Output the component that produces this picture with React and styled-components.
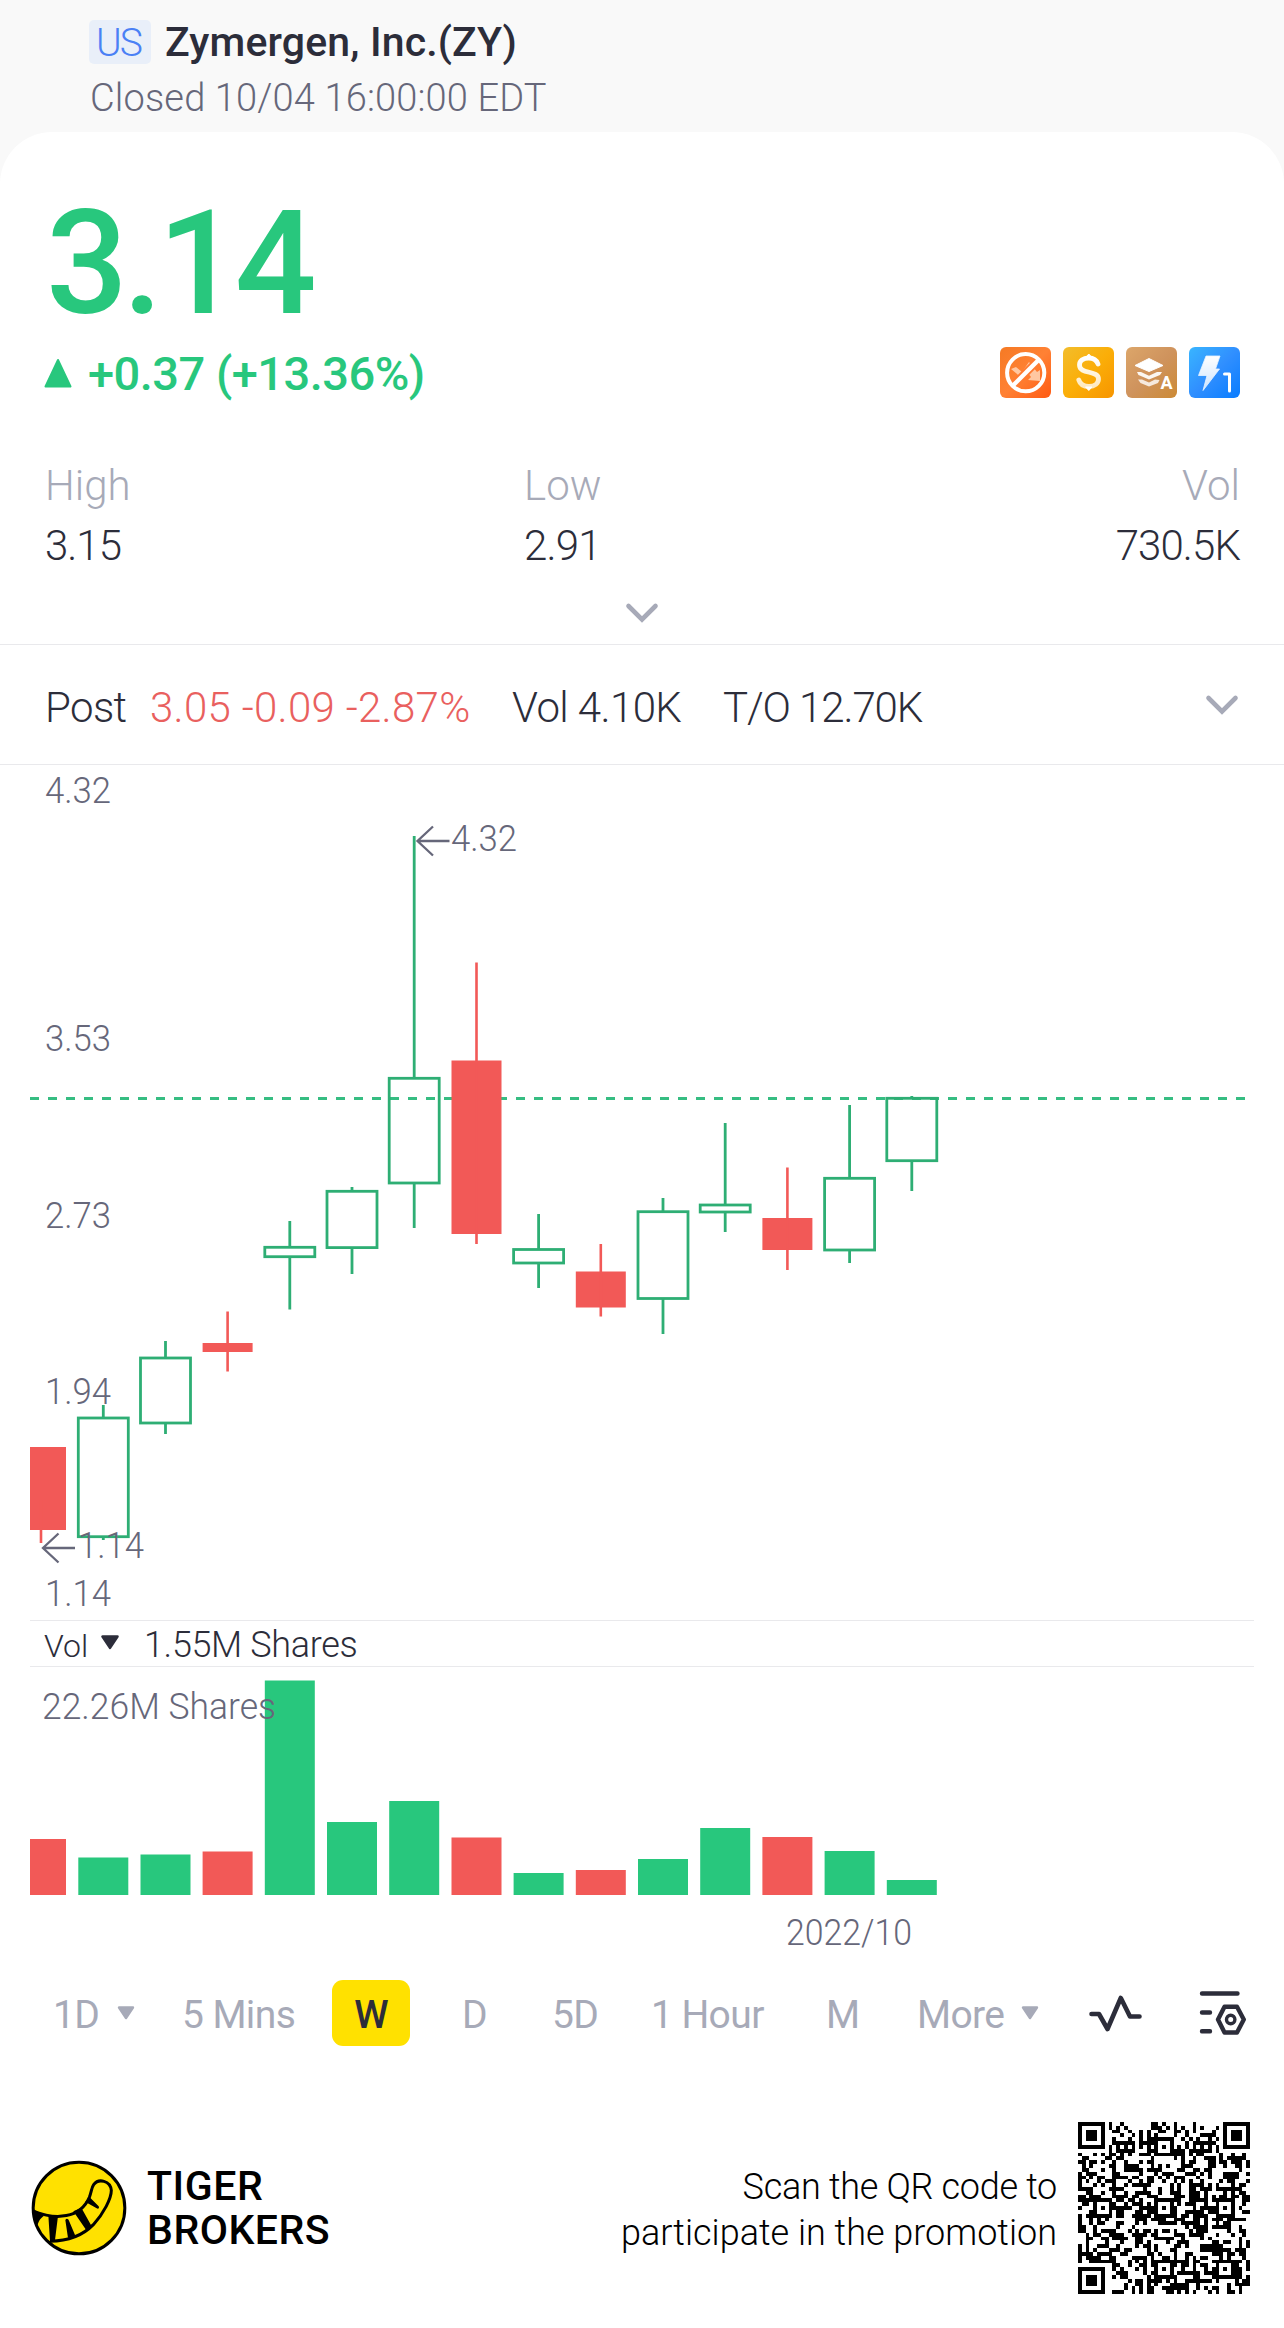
import React from 'react';
import styled, { createGlobalStyle } from 'styled-components';

const GREEN = '#28c77d';
const LINE_GREEN = '#2eae74';
const RED = '#f25957';
const INK = '#2c2d3a';
const GRAY = '#66677a';
const LIGHT = '#a7aab8';

const GlobalStyle = createGlobalStyle`
    *{
        box-sizing:border-box;
    }
    body{
        margin:0;
        background:#fff;
        font-family:Roboto, "Liberation Sans", sans-serif;
        color:${INK};
    }
    svg{
        display:block;
    }
`;

const Page = styled.div`
    width:1284px;
    height:2328px;
    overflow:hidden;
    display:flex;
    flex-direction:column;
    background:#f9f9f9;
`;

const Text = styled.span`
    display:block;
    white-space:pre;
    font-size:${p => p.$size || 42}px;
    font-weight:${p => p.$weight || 350};
    letter-spacing:${p => p.$spacing || 0}px;
    line-height:${p => p.$line || 60}px;
    color:${p => p.$color || INK};
`;

const Header = styled.header`
    height:132px;
    padding:20px 0 0 89px;
`;

const TitleRow = styled.div`
    display:flex;
    gap:14px;
`;

const Market = styled.div`
    width:62px;
    height:44px;
    padding-right:3px;
    display:flex;
    justify-content:center;
    border-radius:5px;
    background:#e9eff9;
`;

const Status = styled.div`
    margin:12px 0 0 1px;
`;

const Panel = styled.main`
    flex:1;
    padding-top:72px;
    border-radius:52px 52px 0 0;
    background:#fff;
`;

const Price = styled.div`
    padding-left:46px;
`;

const ChangeRow = styled.div`
    display:flex;
    align-items:center;
    height:52px;
    margin-top:23px;
    padding:0 44px;
`;

const ChangeText = styled.div`
    flex:1;
    padding:1px 0 0 16px;
`;

const Badges = styled.div`
    display:flex;
    gap:12px;
    margin-top:-2px;
`;

const Stats = styled.div`
    display:flex;
    margin-top:57px;
    padding:0 44px 0 45px;
`;

const Stat = styled.div`
    width:${p => p.$width || 'auto'};
    flex:${p => (p.$width ? 'none' : 1)};
    text-align:${p => p.$align || 'left'};
`;

const ExpandRow = styled.div`
    display:flex;
    justify-content:center;
    height:69px;
    padding-top:26px;
    border-bottom:1px solid #e9e9ec;
`;

const PostRow = styled.div`
    display:flex;
    align-items:center;
    height:120px;
    padding:7px 45px 0 45px;
    border-bottom:1px solid #e9e9ec;
`;

const PostItem = styled.div`
    width:${p => p.$width}px;
`;

const PostToggle = styled.div`
    margin:-7px 0 0 auto;
`;

const VolHeader = styled.div`
    display:flex;
    align-items:center;
    height:47px;
    margin:0 30px;
    padding:2px 0 0 14px;
    border-top:1px solid #e9e9ec;
    border-bottom:1px solid #e9e9ec;
`;

const VolName = styled.div`
    width:56px;
    padding-top:3px;
`;

const VolMark = styled.div`
    padding-bottom:4px;
`;

const VolValue = styled.div`
    padding-left:24px;
`;

const Tabs = styled.nav`
    display:grid;
    grid-template-columns:129px 150px 130px 90px 99px 175px 91px 172px 110px auto;
    align-items:center;
    height:66px;
    margin-top:20px;
    padding-left:53px;
`;

const Tab = styled.div`
    display:flex;
    align-items:center;
    gap:${p => p.$gap || 0}px;
`;

const TabLabel = styled(Text)`
    padding-top:4px;
    font-size:39px;
    font-weight:400;
    letter-spacing:-.6px;
    color:${LIGHT};
`;

const ActiveTab = styled.div`
    width:78px;
    height:66px;
    display:flex;
    align-items:center;
    justify-content:center;
    border-radius:11px;
    background:#ffe100;
`;

const ActiveLabel = styled(TabLabel)`
    font-weight:500;
    color:${INK};
`;

const Footer = styled.footer`
    display:flex;
    align-items:center;
    margin-top:76px;
    padding:0 34px 0 30px;
`;

const Brand = styled.div`
    flex:1;
    padding-left:19px;
`;

const Promo = styled.div`
    text-align:right;
    padding:4px 21px 0 0;
`;

// x is the centre of each bar; open/close boxes and wicks in chart units
const candles = [
    { x: 41, top: 1447, bottom: 1530, high: 1500, low: 1543, vol: 1839, down: true },
    { x: 103.3, top: 1418, bottom: 1536.7, high: 1405, low: 1540, vol: 1857.5 },
    { x: 165.5, top: 1358, bottom: 1423, high: 1341, low: 1434, vol: 1854.5 },
    { x: 227.6, top: 1343, bottom: 1352, high: 1311.5, low: 1371.5, vol: 1851.5, down: true },
    { x: 289.8, top: 1247.3, bottom: 1256.7, high: 1221, low: 1309.5, vol: 1680.5 },
    { x: 352, top: 1191.3, bottom: 1247.6, high: 1187, low: 1274, vol: 1822 },
    { x: 414.2, top: 1078.3, bottom: 1183, high: 836, low: 1228, vol: 1801 },
    { x: 476.5, top: 1060.5, bottom: 1234, high: 962.5, low: 1244, vol: 1837.5, down: true },
    { x: 538.6, top: 1249.5, bottom: 1263, high: 1214, low: 1288, vol: 1873 },
    { x: 600.8, top: 1271.5, bottom: 1307.5, high: 1244, low: 1316.5, vol: 1870, down: true },
    { x: 663, top: 1211.7, bottom: 1298.5, high: 1198, low: 1334, vol: 1859 },
    { x: 725.2, top: 1205, bottom: 1212, high: 1123, low: 1232, vol: 1828 },
    { x: 787.4, top: 1218, bottom: 1250, high: 1167.5, low: 1270, vol: 1837, down: true },
    { x: 849.6, top: 1178.3, bottom: 1250, high: 1105, low: 1263, vol: 1851 },
    { x: 911.8, top: 1098.3, bottom: 1160.7, high: 1096, low: 1191, vol: 1880 },
];

const axisLabels = [
    { text: '4.32', y: 803 },
    { text: '3.53', y: 1051 },
    { text: '2.73', y: 1228 },
    { text: '1.94', y: 1404 },
    { text: '1.14', y: 1606 },
];

const ChartText = styled.text`
    font-size:36px;
    font-weight:350;
    fill:${GRAY};
`;

const Candle = ({ x, top, bottom, high, low, down }) => {
    if (down) {
        const left = Math.max(30, x - 25);
        return (
            <g fill={RED}>
                <rect x={left} y={top} width={x + 25 - left} height={bottom - top} />
                <rect x={x - 1.3} y={high} width="2.6" height={low - high} />
            </g>
        );
    }
    return (
        <g stroke={LINE_GREEN} strokeWidth="2.8" fill="none">
            <rect x={x - 25} y={top} width="50" height={bottom - top} />
            <path d={`M${x} ${high}V${top}M${x} ${bottom}V${low}`} />
        </g>
    );
};

const Arrow = ({ x, y }) => (
    <path d={`M${x + 15.5} ${y - 14.5}L${x} ${y}L${x + 15.5} ${y + 14.5}M${x} ${y}H${x + 32}`} fill="none" stroke={GRAY} strokeWidth="2.3" />
);

const PriceChart = () => (
    <svg width="1284" height="855" viewBox="0 765 1284 855">
        <path d="M30 1098.5H1248" stroke="#36bd82" strokeWidth="2.8" strokeDasharray="9 9" />
        {axisLabels.map(l => (
            <ChartText key={l.text} x="45" y={l.y} textLength="66" lengthAdjust="spacingAndGlyphs">{l.text}</ChartText>
        ))}
        {candles.map(c => <Candle key={c.x} {...c} />)}
        <Arrow x={417.5} y={841} />
        <ChartText x="451" y="851" textLength="66" lengthAdjust="spacingAndGlyphs">4.32</ChartText>
        <Arrow x={43} y={1548} />
        <ChartText x="78" y="1558" textLength="66" lengthAdjust="spacingAndGlyphs">1.14</ChartText>
    </svg>
);

const VolumeChart = () => (
    <svg width="1284" height="293" viewBox="0 1667 1284 293">
        {candles.map(c => {
            const left = Math.max(30, c.x - 25);
            return <rect key={c.x} x={left} y={c.vol} width={c.x + 25 - left} height={1895 - c.vol} fill={c.down ? RED : GREEN} />;
        })}
        <ChartText x="42" y="1719" textLength="234" lengthAdjust="spacingAndGlyphs">22.26M Shares</ChartText>
        <ChartText x="786" y="1945" textLength="126" lengthAdjust="spacingAndGlyphs">2022/10</ChartText>
    </svg>
);

const Chevron = () => (
    <svg width="34" height="22" viewBox="0 0 34 22">
        <path d="M3.5 4L17 17.5L30.5 4" fill="none" stroke={LIGHT} strokeWidth="4.6" strokeLinecap="round" />
    </svg>
);

const Caret = ({ color, width = 18, height = 14 }) => (
    <svg width={width} height={height} viewBox="0 0 18 14">
        <path d="M2 1.5H16L9 12Z" fill={color} stroke={color} strokeWidth="2.4" strokeLinejoin="round" />
    </svg>
);

const BadgeIcon = ({ id, from, mid, to, children }) => (
    <svg width="51" height="51" viewBox="0 0 51 51">
        <defs>
            <linearGradient id={id} x1="0" y1="0" x2="1" y2="1">
                <stop offset="0" stopColor={from} />
                <stop offset=".5" stopColor={mid} />
                <stop offset="1" stopColor={to} />
            </linearGradient>
            <linearGradient id={id + 'Fade'} x1="0" y1="0" x2="0" y2="1">
                <stop offset="0" stopColor="#fff" />
                <stop offset="1" stopColor="#fff" stopOpacity=".75" />
            </linearGradient>
        </defs>
        <rect width="51" height="51" rx="6" fill={`url(#${id})`} />
        {children}
    </svg>
);

const StatusBadges = () => (
    <Badges>
        <BadgeIcon id="noShort" from="#f57a24" mid="#ff8134" to="#ff5a12">
            <path d="M11 22L16 20L22 25L29 15L37 25L40 23L40 34L28 33L31 30L28 26L23 32Z" fill="#ffc7a1" />
            <path d="M12.5 39L39 12.5" stroke="#ff7a30" strokeWidth="8" />
            <circle cx="25.7" cy="25.7" r="18.6" fill="none" stroke="#fff" strokeWidth="4" />
            <path d="M12.5 39L39 12.5" stroke="#fff" strokeWidth="4.4" />
        </BadgeIcon>
        <BadgeIcon id="cash" from="#f2bd2c" mid="#fbae08" to="#f79500">
            <path d="M35 17C33.5 13 30 11 25.7 11C20 11 16.5 14 16.5 18C16.5 28 35.5 22.5 35.5 32C35.5 36.5 31.5 39.5 26 39.5C20.5 39.5 17 37 15.8 33" fill="none" stroke="url(#cashFade)" strokeWidth="4.8" strokeLinecap="round" />
            <path d="M22.5 10.5L25.800 7L29 10.5ZM22.5 40L25.8 43.5L29 40Z" fill="#fff" stroke="#fff" strokeWidth="1" strokeLinejoin="round" />
        </BadgeIcon>
        <BadgeIcon id="level" from="#dca66a" mid="#cf935d" to="#cc8a35">
            <path d="M9 18.5L23 11.5L37 18.5L23 24.5Z" fill="#fff" stroke="#fff" strokeLinejoin="round" />
            <path d="M11 25L15 25L23 28.7L31 25L36 25L34 28L23 32.5L12.5 28Z" fill="#fff" opacity=".92" />
            <path d="M12 32.5L16 32.5L23 35.5L29 32.5L33.5 33L32 36L23 39.5L14.5 36Z" fill="#fff" opacity=".8" />
            <text x="34.6" y="41.6" fontSize="18" fontWeight="700" fill="#fff">A</text>
        </BadgeIcon>
        <BadgeIcon id="flash" from="#39b5ff" mid="#308fff" to="#087cff">
            <path d="M17 9H31L26.5 22H30.5L14 43.5L18 28.5H9.5Z" fill="url(#flashFade)" stroke="#e8f4ff" strokeWidth=".8" strokeLinejoin="round" />
            <path d="M35.5 27H40.5V44" fill="none" stroke="#fff" strokeWidth="3" strokeLinecap="round" strokeLinejoin="round" />
        </BadgeIcon>
    </Badges>
);

const PulseIcon = () => (
    <svg width="54" height="44" viewBox="1088 1992 54 44">
        <path d="M1090.5 2015H1098L1106.5 2030L1119.8 1999L1129 2017.5H1138.5" fill="none" stroke={INK} strokeWidth="4.6" strokeLinecap="round" strokeLinejoin="round" />
    </svg>
);

const ChartSettingsIcon = () => (
    <svg width="50" height="46" viewBox="1198 1991 50 46">
        <g fill="none" stroke={INK} strokeWidth="4.4" strokeLinecap="round" strokeLinejoin="round">
            <path d="M1201 1994.5H1236.5M1201 2013.5H1209M1201 2032.3H1209" />
            <path d="M1217 2020.5L1223.5 2007.8H1236L1242.8 2020.5L1236 2033.5H1223.5Z" />
            <circle cx="1229.7" cy="2020.5" r="4.2" strokeWidth="3.4" />
        </g>
    </svg>
);

const TigerLogo = () => (
    <svg width="98" height="98" viewBox="88 117 294 294">
        <circle cx="235" cy="264" r="137.5" fill="#ffe100" stroke="#000" strokeWidth="9" />
        <path d="M100 274C165 300 238 296 266 232C273 214 272 204 279 194C294 174 329 182 332 211C332 236 309 280 278 314C247 346 205 363 148 364" fill="none" stroke="#000" strokeWidth="9" strokeLinejoin="round" />
        <path d="M98 268L130 287C117 296 111 308 109 324L98 298ZM143 286L172 288L163 360L148 363ZM194 300C198 294 202 296 205 302L224 347L202 354ZM218 274L242 263L273 319L256 329ZM254 245L267 232L294 259C297 264 293 268 288 265L260 249Z" fill="#000" />
    </svg>
);

const QR_SIZE = 45;
const finders = [[0, 0], [38, 0], [0, 38]];
const aligns = [[22, 6], [6, 22], [22, 22], [38, 22], [22, 38], [38, 38]];

const buildQr = () => {
    let seed = 20221004;
    const next = () => {
        seed = (seed * 1664525 + 1013904223) >>> 0;
        return seed / 4294967296;
    };
    let d = '';
    for (let y = 0; y < QR_SIZE; y++) {
        for (let x = 0; x < QR_SIZE; x++) {
            let on = next() < 0.5;
            if (y === 6) on = x % 2 === 0;
            if (x === 6) on = y % 2 === 0;
            aligns.forEach(([ax, ay]) => {
                const r = Math.max(Math.abs(x - ax), Math.abs(y - ay));
                if (r <= 2) on = r !== 1;
            });
            finders.forEach(([fx, fy]) => {
                const r = Math.max(Math.abs(x - fx - 3), Math.abs(y - fy - 3));
                if (r <= 4) on = r < 2 || r === 3;
            });
            if (on) d += `M${x} ${y}h1v1h-1z`;
        }
    }
    return d;
};

const QrCode = () => (
    <svg width="172" height="172" viewBox="0 0 45 45" shapeRendering="crispEdges">
        <path d={buildQr()} fill="#000" />
    </svg>
);

const App = () => {
    return (
        <>
        <GlobalStyle />
        <Page>
            <Header>
                <TitleRow>
                    <Market><Text $size={39} $line={47} $spacing={-2} $color="#4a80f5">US</Text></Market>
                    <Text $size={41} $weight={500} $line={44} $spacing={0.15}>Zymergen, Inc.(ZY)</Text>
                </TitleRow>
                <Status><Text $size={38} $line={45} $spacing={0.15} $color={GRAY}>Closed 10/04 16:00:00 EDT</Text></Status>
            </Header>
            <Panel>
                <Price><Text $size={144} $weight={500} $line={120} $spacing={-5} $color={GREEN}>3.14</Text></Price>
                <ChangeRow>
                    <svg width="28" height="30" viewBox="0 0 28 30">
                        <path d="M14 2L26.5 28.5H1.5Z" fill={GREEN} stroke={GREEN} strokeWidth="2" strokeLinejoin="round" />
                    </svg>
                    <ChangeText><Text $size={47} $weight={500} $line={52} $spacing={-0.5} $color={GREEN}>+0.37 (+13.36%)</Text></ChangeText>
                    <StatusBadges />
                </ChangeRow>
                <Stats>
                    <Stat $width="479px">
                        <Text $color={LIGHT}>High</Text>
                        <Text $spacing={-1}>3.15</Text>
                    </Stat>
                    <Stat $width="300px">
                        <Text $color={LIGHT}>Low</Text>
                        <Text $spacing={-0.8}>2.91</Text>
                    </Stat>
                    <Stat $align="right">
                        <Text $color={LIGHT}>Vol</Text>
                        <Text $spacing={-0.9}>730.5K</Text>
                    </Stat>
                </Stats>
                <ExpandRow><Chevron /></ExpandRow>
                <PostRow>
                    <PostItem $width={105}><Text $spacing={-0.6}>Post</Text></PostItem>
                    <PostItem $width={362}><Text $spacing={0.3} $color="#e9605e">3.05 -0.09 -2.87%</Text></PostItem>
                    <PostItem $width={211}><Text $spacing={-0.6}>Vol 4.10K</Text></PostItem>
                    <PostItem $width={220}><Text $spacing={-1.1}>T/O 12.70K</Text></PostItem>
                    <PostToggle><Chevron /></PostToggle>
                </PostRow>
                <PriceChart />
                <VolHeader>
                    <VolName><Text $size={32} $line={40}>Vol</Text></VolName>
                    <VolMark><Caret color={INK} width={20} height={15} /></VolMark>
                    <VolValue><Text $size={36} $line={44} $spacing={-0.35}>1.55M Shares</Text></VolValue>
                </VolHeader>
                <VolumeChart />
                <Tabs>
                    <Tab $gap={18}><TabLabel $spacing={-1}>1D</TabLabel><Caret color={LIGHT} /></Tab>
                    <Tab><TabLabel>5 Mins</TabLabel></Tab>
                    <ActiveTab><ActiveLabel>W</ActiveLabel></ActiveTab>
                    <Tab><TabLabel>D</TabLabel></Tab>
                    <Tab><TabLabel>5D</TabLabel></Tab>
                    <Tab><TabLabel>1 Hour</TabLabel></Tab>
                    <Tab><TabLabel>M</TabLabel></Tab>
                    <Tab $gap={17}><TabLabel>More</TabLabel><Caret color={LIGHT} /></Tab>
                    <PulseIcon />
                    <ChartSettingsIcon />
                </Tabs>
                <Footer>
                    <TigerLogo />
                    <Brand>
                        <Text $size={41} $weight={500} $line={44} $spacing={0.6} $color="#000">TIGER</Text>
                        <Text $size={41} $weight={500} $line={44} $spacing={0.5} $color="#000">BROKERS</Text>
                    </Brand>
                    <Promo>
                        <Text $size={36} $line={46} $spacing={-0.3} $color="#000">Scan the QR code to</Text>
                        <Text $size={36} $line={46} $color="#000">participate in the promotion</Text>
                    </Promo>
                    <QrCode />
                </Footer>
            </Panel>
        </Page>
        </>
    );
};

export default App;
